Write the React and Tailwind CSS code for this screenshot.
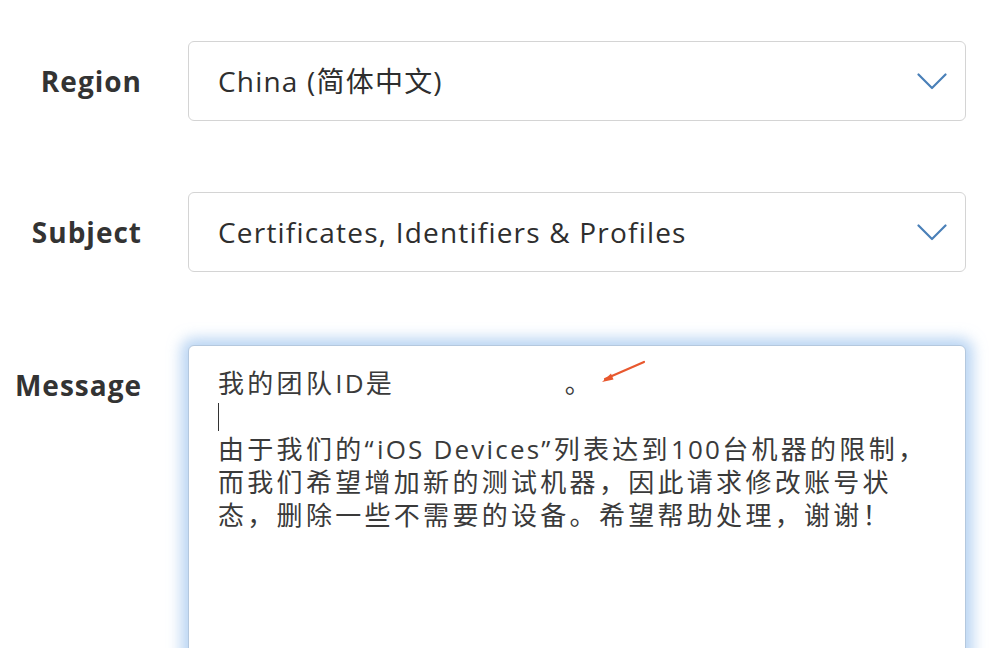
import React from "react";

const latin = { fontFamily: '"Open Sans", "Noto Sans", sans-serif' };
const cjk = { fontFamily: '"Open Sans", "Noto Sans CJK SC", sans-serif' };

function Chevron() {
  return (
    <svg width="30" height="17" viewBox="0 0 30 17" fill="none" className="shrink-0">
      <path d="M1.5 1.5 L15 15 L28.5 1.5" stroke="#4a80b8" strokeWidth="2.2" strokeLinecap="round" strokeLinejoin="round" />
    </svg>
  );
}

function SelectBox({ value }) {
  return (
    <div className="ml-[46px] flex h-[80px] w-[778px] items-center justify-between rounded-[6px] border border-[#d4d4d4] bg-white pl-[29px] pr-[18px]">
      <span className="text-[28px] tracking-[1.2px] text-[#2e2e2e]" style={cjk}>{value}</span>
      <Chevron />
    </div>
  );
}

function Label({ children, className = "" }) {
  return (
    <div className={"w-[142px] shrink-0 text-right text-[28px] font-bold tracking-[1px] text-[#333333] " + className} style={latin}>
      {children}
    </div>
  );
}

function L({ children }) {
  return <span className="tracking-[2.2px]">{children}</span>;
}

export default function App() {
  return (
    <div className="relative h-[648px] w-[998px] overflow-hidden bg-white">
      <div className="flex flex-col pt-[41px]">
        <div className="flex items-center">
          <Label>Region</Label>
          <SelectBox value="China (简体中文)" />
        </div>
        <div className="mt-[71px] flex items-center">
          <Label>Subject</Label>
          <SelectBox value="Certificates, Identifiers & Profiles" />
        </div>
        <div className="mt-[73px] flex items-start">
          <Label className="pt-[19px]">Message</Label>
          <div className="ml-[46px] h-[330px] w-[778px] rounded-[6px] border border-[#b4c8de] bg-white pl-[29px] pr-[20px] pt-[21px] shadow-[0_0_14px_7px_rgba(140,185,235,0.6)]">
            <div className="text-[26px] leading-[33px] tracking-[3.3px] text-[#3a3a3a]" style={cjk}>
              <div className="flex items-center">
                <span>我的团队<L>ID</L>是</span>
                <span className="inline-block w-[199px] text-right">。</span>
              </div>
              <div className="flex h-[33px] items-center">
                <span className="inline-block h-[28px] w-px bg-[#333]" />
              </div>
              <div>由于我们的“<L>iOS Devices</L>”列表达到<L>100</L>台机器的限制，</div>
              <div>而我们希望增加新的测试机器，因此请求修改账号状</div>
              <div>态，删除一些不需要的设备。希望帮助处理，谢谢！</div>
            </div>
          </div>
        </div>
      </div>
      <svg className="absolute left-[596px] top-[358px]" width="52" height="30" viewBox="0 0 52 30" fill="none">
        <path d="M48 4 L9 21" stroke="#e8582e" strokeWidth="2.2" strokeLinecap="round" />
        <path d="M6 24 L15 15.5 L17.5 21.5 Z" fill="#e8582e" />
      </svg>
    </div>
  );
}
